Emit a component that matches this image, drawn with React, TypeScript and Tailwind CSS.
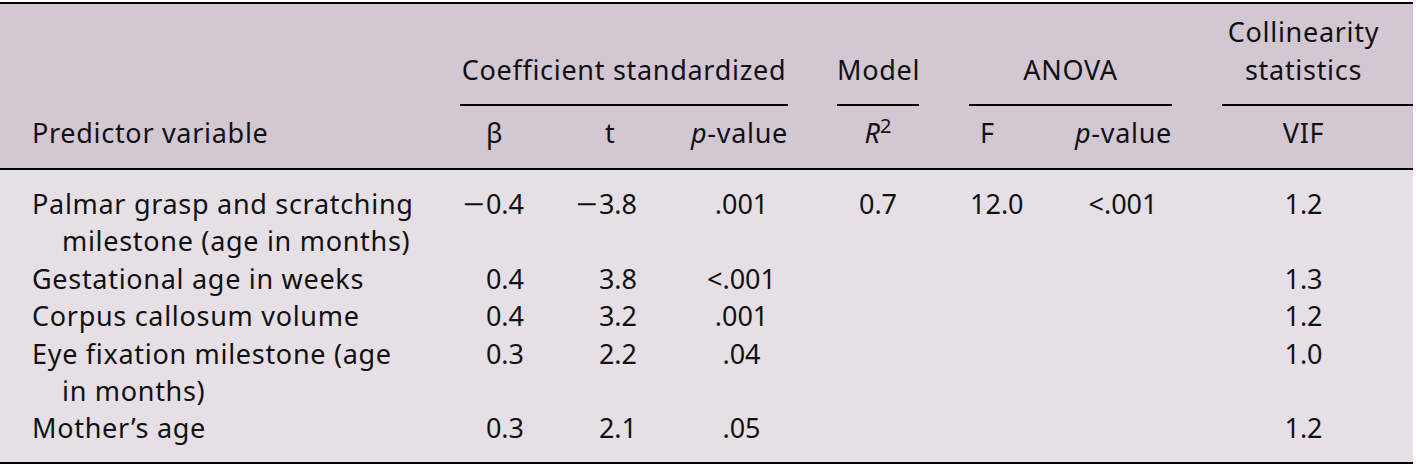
import React from "react";

const cols =
  "grid grid-cols-[460px_115px_90px_123px_49px_82px_50px_71px_132px_50px_191px]";

type Row = {
  name: string;
  beta: string;
  t: string;
  p: string;
  r2?: string;
  f?: string;
  p2?: string;
  vif: string;
};

const rows: Row[] = [
  {
    name: "Palmar grasp and scratching milestone (age in months)",
    beta: "-0.4",
    t: "-3.8",
    p: ".001",
    r2: "0.7",
    f: "12.0",
    p2: "<.001",
    vif: "1.2",
  },
  { name: "Gestational age in weeks", beta: "0.4", t: "3.8", p: "<.001", vif: "1.3" },
  { name: "Corpus callosum volume", beta: "0.4", t: "3.2", p: ".001", vif: "1.2" },
  { name: "Eye fixation milestone (age in months)", beta: "0.3", t: "2.2", p: ".04", vif: "1.0" },
  { name: "Mother\u2019s age", beta: "0.3", t: "2.1", p: ".05", vif: "1.2" },
];

// negative numbers get a real minus sign, a bit wider like the print version
const Num = ({ v }: { v: string }) =>
  v.startsWith("-") ? (
    <span>
      <span className="mr-[4px] inline-block scale-x-[1.4]">{"\u2212"}</span>
      {v.slice(1)}
    </span>
  ) : (
    <span>{v}</span>
  );

const PValue = () => (
  <span className="tracking-[0.7px]">
    <i>p</i>-value
  </span>
);

export default function App() {
  return (
    <div className="w-[1416px] min-h-[467px] bg-white pt-[2px] font-['Noto_Sans',sans-serif] text-[27px] leading-[38px] text-[#111]">
      <div className="w-[1413px] border-t-2 border-b-2 border-black">
        {/* header */}
        <div className="bg-[#d3c7d4] border-b-2 border-black tracking-[0.7px]">
          <div className={`${cols} items-end`}>
            <div />
            <div className="col-span-3 border-b-2 border-black pt-[9px] pb-[15px] text-center">
              Coefficient standardized
            </div>
            <div />
            <div className="border-b-2 border-black pb-[15px] text-center">Model</div>
            <div />
            <div className="col-span-2 border-b-2 border-black pb-[15px] text-center">ANOVA</div>
            <div />
            <div className="border-b-2 border-black pt-[9px] pb-[15px] pr-[28px] text-center">
              Collinearity
              <br />
              statistics
            </div>
          </div>
          <div className={`${cols} pt-[8px] pb-[16px]`}>
            <div className="pl-[32px]">Predictor variable</div>
            <div className="pl-[26px]">β</div>
            <div className="pl-[30px]">t</div>
            <div className="text-right">
              <PValue />
            </div>
            <div />
            <div className="text-center tracking-normal">
              <i>R</i>
              <sup className="text-[20px]">2</sup>
            </div>
            <div />
            <div className="pl-[11px]">F</div>
            <div className="text-right">
              <PValue />
            </div>
            <div />
            <div className="pr-[28px] text-center">VIF</div>
          </div>
        </div>

        {/* body */}
        <div className="bg-[#e6e0e6] py-[15px] leading-[37.4px]">
          {rows.map((r) => (
            <div key={r.name} className={cols}>
              <div className="pl-[62px] pr-[42px] -indent-[30px] tracking-[0.7px]">{r.name}</div>
              <div className="pr-[51px] text-right">
                <Num v={r.beta} />
              </div>
              <div className="pr-[28px] text-right">
                <Num v={r.t} />
              </div>
              <div className="pl-[30px] text-center">{r.p}</div>
              <div />
              <div className="text-center">{r.r2}</div>
              <div />
              <div className="pl-[1px]">{r.f}</div>
              <div className="pl-[34px] text-center">{r.p2}</div>
              <div />
              <div className="pr-[28px] text-center">{r.vif}</div>
            </div>
          ))}
        </div>
      </div>
    </div>
  );
}
